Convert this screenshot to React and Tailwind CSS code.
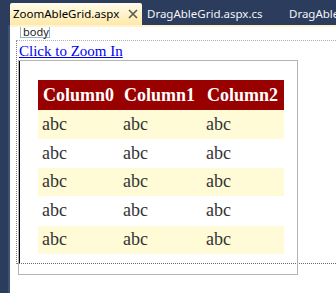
import React from "react";

const rows = [
  { bg: "bg-[#fffbd6]", h: "h-[29px]" },
  { bg: "bg-white", h: "h-[29px]" },
  { bg: "bg-[#fffbd6]", h: "h-[28px]" },
  { bg: "bg-white", h: "h-[30px]" },
  { bg: "bg-[#fffbd6]", h: "h-[28px]" },
];

const cols = ["w-[81px]", "w-[83px]", "w-[82px]"];

function CloseIcon() {
  return (
    <svg width="10" height="10" viewBox="0 0 10 10" className="shrink-0">
      <path d="M1 1 L9 9 M9 1 L1 9" stroke="#5a5a4a" strokeWidth="1.6" />
    </svg>
  );
}

export default function App() {
  return (
    <div className="w-[336px] h-[293px] overflow-hidden bg-[#2b3c5c] flex flex-col font-['Noto_Sans',sans-serif]">
      {/* document tabs */}
      <div className="h-[25px] flex items-end shrink-0 overflow-hidden text-[11.5px] leading-none">
        <div className="shrink-0 ml-[10px] w-[132px] h-[22px] rounded-t-[2px] bg-gradient-to-b from-[#fffcec] to-[#ffe9a8] flex items-center pl-[3px] text-black">
          <span className="w-[115px] whitespace-nowrap">ZoomAbleGrid.aspx</span>
          <CloseIcon />
        </div>
        <div className="shrink-0 h-[22px] flex items-center pl-[5px] w-[142px] text-[#f2f4f8] whitespace-nowrap">
          DragAbleGrid.aspx.cs
        </div>
        <div className="shrink-0 h-[22px] flex items-center pl-[5px] text-[#f2f4f8] whitespace-nowrap">
          DragAbleGrid.aspx
        </div>
      </div>

      <div className="flex flex-1">
        <div className="w-[10px] bg-[#2b3c5c] border-r-2 border-[#3e5172]" />
        <div className="flex-1 bg-white border-t-2 border-[#fff3d0]">
          {/* body tag */}
          <div className="ml-[10px] w-[30px] h-[11px] border-x border-b border-[#9fb2cf] text-[11px] leading-[9px] text-[#222] pl-[2px]">
            body
          </div>

          {/* body outline */}
          <div className="mt-[2px] ml-[6px] h-[224px] border-l border-b border-t border-dotted border-l-[#6f7a8c] border-b-[#6a6a6a] border-t-[#b0b0b0]">
            <div className="h-[19px] pl-[2px] font-['Liberation_Serif',serif] text-[15px] leading-[21px]">
              <a className="text-[#0000ee] underline">Click to Zoom In</a>
            </div>
            <div className="ml-[1px] w-[280px] h-[215px] border border-[#b4b4b4]">
              <div className="h-[202px] border-l border-black pl-[18px] pt-[19px]">
                <div className="w-[246px] font-['Liberation_Serif',serif] text-[18px]">
                  <div className="flex h-[30px] bg-[#990000] text-white font-bold">
                    {["Column0", "Column1", "Column2"].map((c, i) => (
                      <div key={c} className={`${cols[i]} flex items-center pl-[5px]`}>
                        {c}
                      </div>
                    ))}
                  </div>
                  {rows.map((r, ri) => (
                    <div key={ri} className={`flex ${r.h} ${r.bg} text-[#333333]`}>
                      {cols.map((w, i) => (
                        <div key={i} className={`${w} flex items-center pl-[4px] pb-[1px]`}>
                          abc
                        </div>
                      ))}
                    </div>
                  ))}
                </div>
              </div>
            </div>
          </div>
        </div>
      </div>
    </div>
  );
}
